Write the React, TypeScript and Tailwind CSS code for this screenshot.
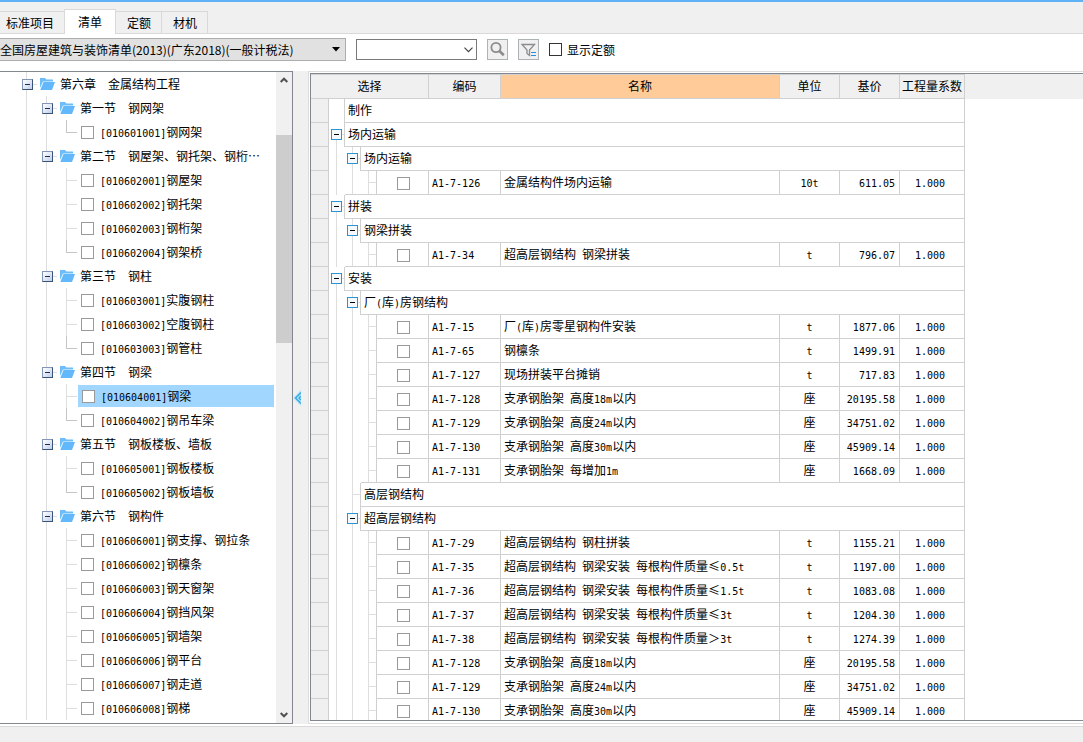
import { useState } from 'react';

type TreeItem = { title: string; items: string[][]; more?: boolean };

const CHAPTER = '第六章　金属结构工程';

const SECTIONS: TreeItem[] = [
  { title: '第一节　钢网架', items: [['010601001', '钢网架']] },
  {
    title: '第二节　钢屋架、钢托架、钢桁…',
    items: [
      ['010602001', '钢屋架'],
      ['010602002', '钢托架'],
      ['010602003', '钢桁架'],
      ['010602004', '钢架桥'],
    ],
  },
  {
    title: '第三节　钢柱',
    items: [
      ['010603001', '实腹钢柱'],
      ['010603002', '空腹钢柱'],
      ['010603003', '钢管柱'],
    ],
  },
  {
    title: '第四节　钢梁',
    items: [
      ['010604001', '钢梁'],
      ['010604002', '钢吊车梁'],
    ],
  },
  {
    title: '第五节　钢板楼板、墙板',
    items: [
      ['010605001', '钢板楼板'],
      ['010605002', '钢板墙板'],
    ],
  },
  {
    title: '第六节　钢构件',
    more: true,
    items: [
      ['010606001', '钢支撑、钢拉条'],
      ['010606002', '钢檩条'],
      ['010606003', '钢天窗架'],
      ['010606004', '钢挡风架'],
      ['010606005', '钢墙架'],
      ['010606006', '钢平台'],
      ['010606007', '钢走道'],
      ['010606008', '钢梯'],
    ],
  },
];

type Row =
  | { level: 0 | 1; title: string; open?: boolean }
  | { level: 2; code: string; name: string; unit: string; price: string };

const q = (code: string, name: string, unit: string, price: string): Row => ({
  level: 2,
  code,
  name,
  unit,
  price,
});

const ROWS: Row[] = [
  { level: 0, title: '制作' },
  { level: 0, title: '场内运输', open: true },
  { level: 1, title: '场内运输', open: true },
  q('A1-7-126', '金属结构件场内运输', '10t', '611.05'),
  { level: 0, title: '拼装', open: true },
  { level: 1, title: '钢梁拼装', open: true },
  q('A1-7-34', '超高层钢结构 钢梁拼装', 't', '796.07'),
  { level: 0, title: '安装', open: true },
  { level: 1, title: '厂(库)房钢结构', open: true },
  q('A1-7-15', '厂(库)房零星钢构件安装', 't', '1877.06'),
  q('A1-7-65', '钢檩条', 't', '1499.91'),
  q('A1-7-127', '现场拼装平台摊销', 't', '717.83'),
  q('A1-7-128', '支承钢胎架 高度18m以内', '座', '20195.58'),
  q('A1-7-129', '支承钢胎架 高度24m以内', '座', '34751.02'),
  q('A1-7-130', '支承钢胎架 高度30m以内', '座', '45909.14'),
  q('A1-7-131', '支承钢胎架 每增加1m', '座', '1668.09'),
  { level: 1, title: '高层钢结构' },
  { level: 1, title: '超高层钢结构', open: true },
  q('A1-7-29', '超高层钢结构 钢柱拼装', 't', '1155.21'),
  q('A1-7-35', '超高层钢结构 钢梁安装 每根构件质量≤0.5t', 't', '1197.00'),
  q('A1-7-36', '超高层钢结构 钢梁安装 每根构件质量≤1.5t', 't', '1083.08'),
  q('A1-7-37', '超高层钢结构 钢梁安装 每根构件质量≤3t', 't', '1204.30'),
  q('A1-7-38', '超高层钢结构 钢梁安装 每根构件质量＞3t', 't', '1274.39'),
  q('A1-7-128', '支承钢胎架 高度18m以内', '座', '20195.58'),
  q('A1-7-129', '支承钢胎架 高度24m以内', '座', '34751.02'),
  q('A1-7-130', '支承钢胎架 高度30m以内', '座', '45909.14'),
];

/** Latin runs are set in a half-width mono face, so two letters fill one Chinese cell. */
function Mixed({ text }: { text: string }) {
  return (
    <>
      {text.split(/([\x20-\x7e]+)/).map((part, i) =>
        i % 2 ? (
          <span
            key={i}
            className="font-['DejaVu_Sans_Mono','Noto_Sans_CJK_SC',monospace] text-[10px] leading-none whitespace-pre"
          >
            {part}
          </span>
        ) : (
          part
        ),
      )}
    </>
  );
}

function Check({ label }: { label: string }) {
  return (
    <input
      type="checkbox"
      aria-label={label}
      className="block size-[13px] shrink-0 appearance-none border border-[#999] bg-white checked:bg-[#5eb8fb]"
    />
  );
}

function Folder() {
  return (
    <svg width="15" height="12" viewBox="0 0 15 12" className="shrink-0" aria-hidden="true">
      <path d="M0 0h5l1.5 1.5H13V3.5H3L0 10z" fill="#6dbdfb" />
      <path d="M3.5 4H15l-3 8H.3z" fill="#62b8fb" />
    </svg>
  );
}

function TreeGuide({ kind }: { kind: 'line' | 'branch' | 'last' | 'node' }) {
  if (kind === 'branch' || kind === 'last') {
    const color = kind === 'last' ? 'border-[#c4c4c4]' : 'border-[#dedede]';
    return (
      <span className="flex h-6 w-5 shrink-0 flex-col pl-[9px]">
        <span className={`h-[13px] border-b border-l ${color}`} />
        {kind === 'branch' && <span className="flex-1 border-l border-[#dedede]" />}
      </span>
    );
  }
  return (
    <span className="relative h-6 w-5 shrink-0 pl-[9px]">
      <span className="block h-6 border-l border-[#dedede]" />
      {kind === 'node' && (
        <>
          <span className="absolute top-3 right-0 w-1 border-t border-[#dedede]" />
          <button
            type="button"
            aria-label="折叠"
            className="absolute top-[7px] left-[5px] flex size-[11px] items-center justify-center border border-[#8496b4] border-r-[#3b5375] border-b-[#3b5375] bg-linear-to-br from-white to-[#c3d0ea]"
          >
            <span className="h-px w-[5px] bg-[#1c2f52]" />
          </button>
        </>
      )}
    </span>
  );
}

function Tree() {
  const [selected, setSelected] = useState('010604001');
  return (
    <div className="min-w-0 flex-1 overflow-hidden pl-[17px] whitespace-nowrap">
      <div className="flex h-6 items-center">
        <TreeGuide kind="node" />
        <span className="flex items-center gap-[5px] pl-[3px]">
          <Folder />
          {CHAPTER}
        </span>
      </div>
      {SECTIONS.map((section) => (
        <div key={section.title}>
          <div className="flex h-6 items-center">
            <TreeGuide kind="line" />
            <TreeGuide kind="node" />
            <span className="flex items-center gap-[5px] pl-[3px]">
              <Folder />
              {section.title}
            </span>
          </div>
          {section.items.map(([code, name], i, all) => (
            <div key={code} className="flex h-6 items-center">
              <TreeGuide kind="line" />
              <TreeGuide kind="line" />
              <TreeGuide kind={i === all.length - 1 && !section.more ? 'last' : 'branch'} />
              <div
                onClick={() => setSelected(code)}
                className={`mr-[2px] flex h-[22px] flex-1 items-center gap-[6px] pl-1 ${
                  code === selected ? 'ml-px bg-[#a1d6ff]' : ''
                }`}
              >
                <Check label={name} />
                <span>
                  <Mixed text={`[${code}]${name}`} />
                </span>
              </div>
            </div>
          ))}
        </div>
      ))}
    </div>
  );
}

function ScrollBar() {
  return (
    <div className="flex w-4 shrink-0 flex-col items-center bg-[#f0f0f0]">
      <button type="button" aria-label="向上滚动" className="flex h-4 w-full items-center justify-center">
        <svg width="8" height="6" viewBox="0 0 8 6" fill="none" stroke="#505050" strokeWidth="2">
          <path d="M.7 5 4 1.7 7.3 5" />
        </svg>
      </button>
      <div className="mt-[47px] h-[208px] w-full bg-[#cdcdcd]" />
      <button type="button" aria-label="向下滚动" className="mt-auto flex h-4 w-full items-center justify-center">
        <svg width="8" height="6" viewBox="0 0 8 6" fill="none" stroke="#505050" strokeWidth="2">
          <path d="M.7 1 4 4.3 7.3 1" />
        </svg>
      </button>
    </div>
  );
}

/** One 16px tree column of the quota table. */
function GridGuide({
  kind,
  edge,
  bottom,
}: {
  kind: 'none' | 'line' | 'branch' | 'root' | 'node';
  edge: boolean;
  bottom: boolean;
}) {
  const node = kind === 'root' || kind === 'node';
  return (
    <td
      className={`h-6 p-0 ${edge ? 'border-r border-r-[#d0d0d0]' : ''} ${
        bottom ? 'border-b border-b-[#d0d0d0]' : ''
      }`}
    >
      <div className={`relative flex flex-col pl-[7px] ${bottom ? 'h-[23px]' : 'h-6'}`}>
        {kind !== 'none' && (
          <>
            <span
              className={`h-3 ${kind === 'root' ? '' : 'border-l border-[#dedede]'} ${
                kind === 'line' ? '' : 'border-b border-b-[#dedede]'
              }`}
            />
            <span className="flex-1 border-l border-[#dedede]" />
          </>
        )}
        {node && (
          <button
            type="button"
            aria-label="折叠"
            className="absolute top-[6px] left-[2px] flex size-[11px] items-center justify-center border border-[#2c93d0] bg-[#f4f9fd]"
          >
            <span className="h-px w-[5px] bg-black" />
          </button>
        )}
      </div>
    </td>
  );
}

const CELL =
  'h-6 overflow-hidden border-r border-b border-[#d0d0d0] p-0 pb-[2px] leading-5 whitespace-nowrap';

function QuotaRow({ row, next }: { row: Row; next: number }) {
  const guides = [];
  for (let col = 0; col <= row.level; col++) {
    let kind: 'none' | 'line' | 'branch' | 'root' | 'node' = 'line';
    if (col === row.level) {
      if (row.level === 2) kind = 'branch';
      else if (!row.open) kind = col === 0 ? 'none' : 'branch';
      else kind = col === 0 ? 'root' : 'node';
    }
    guides.push(<GridGuide key={col} kind={kind} edge={col === row.level} bottom={col > next} />);
  }

  return (
    <tr>
      <td className={`${CELL} bg-[#f0f0f0]`} />
      {guides}
      {row.level === 2 ? (
        <>
          <td className={`${CELL} pt-1 pl-5`}>
            <Check label={row.code} />
          </td>
          <td className={`${CELL} pl-[3px]`}>
            <Mixed text={row.code} />
          </td>
          <td className={`${CELL} pl-[3px]`}>
            <Mixed text={row.name} />
          </td>
          <td className={`${CELL} text-center`}>
            <Mixed text={row.unit} />
          </td>
          <td className={`${CELL} pr-1 text-right`}>
            <Mixed text={row.price} />
          </td>
          <td className={`${CELL} pr-1 text-center`}>
            <Mixed text="1.000" />
          </td>
        </>
      ) : (
        <td colSpan={8 - row.level} className={`${CELL} pl-[3px]`}>
          <Mixed text={row.title} />
        </td>
      )}
    </tr>
  );
}

function QuotaTable() {
  const head =
    'h-[25px] border-r border-y border-[#d0d0d0] p-0 pb-[2px] leading-5 font-normal whitespace-nowrap';
  return (
    <table className="w-full table-fixed border-separate border-spacing-0">
      <colgroup>
        <col className="w-[18px]" />
        <col className="w-4" />
        <col className="w-4" />
        <col className="w-4" />
        <col className="w-[52px]" />
        <col className="w-[72px]" />
        <col className="w-[279px]" />
        <col className="w-[60px]" />
        <col className="w-[60px]" />
        <col className="w-[65px]" />
        <col />
      </colgroup>
      <thead className="bg-[#f0f0f0]">
        <tr>
          <th colSpan={5} className={head}>选择</th>
          <th className={head}>编码</th>
          <th className={`${head} bg-[#ffcc99]`}>名称</th>
          <th className={head}>单位</th>
          <th className={head}>基价</th>
          <th className={head}>工程量系数</th>
          <th className="p-0" />
        </tr>
      </thead>
      <tbody>
        {ROWS.map((row, i) => (
          <QuotaRow key={i} row={row} next={ROWS[i + 1]?.level ?? 2} />
        ))}
      </tbody>
    </table>
  );
}

const TABS = ['标准项目', '清单', '定额', '材机'];

function Tabs() {
  const [active, setActive] = useState('清单');
  return (
    <div role="tablist" className="flex h-8 shrink-0 items-end border-b border-[#d9d9d9]">
      {TABS.map((tab, i) => (
        <button
          key={tab}
          type="button"
          role="tab"
          aria-selected={tab === active}
          onClick={() => setActive(tab)}
          className={
            tab === active
              ? '-mb-px -ml-px h-[25px] border-x border-t border-[#d9d9d9] bg-white px-[13px]'
              : `h-[22px] border-t border-r border-[#d9d9d9] pr-[10px] ${i === 0 ? 'pl-[6px]' : 'pl-[11px]'}`
          }
        >
          {tab}
        </button>
      ))}
    </div>
  );
}

function Toolbar() {
  return (
    <div className="flex h-[37px] shrink-0 items-start bg-white pt-1">
      <div className="relative w-[346px] shrink-0">
        <select
          aria-label="清单库"
          className="block h-[23px] w-full appearance-none border border-l-0 border-[#adadad] bg-[#e1e1e1] pr-6 text-xs"
        >
          <option>全国房屋建筑与装饰清单(2013)(广东2018)(一般计税法)</option>
        </select>
        <svg width="8" height="5" viewBox="0 0 8 5" className="pointer-events-none absolute top-[9px] right-[6px]">
          <path d="M0 0h8L4 4.5z" fill="#000" />
        </svg>
      </div>
      <div className="relative mt-px ml-[10px] w-[121px] shrink-0">
        <input aria-label="查找" className="block h-[21px] w-full border border-[#7a7a7a] bg-white pr-5 pl-1" />
        <button type="button" aria-label="展开" className="absolute top-[8px] right-[4px]">
          <svg width="9" height="6" viewBox="0 0 9 6" fill="none" stroke="#444" strokeWidth="1.2" className="block">
            <path d="M.5.7l4 4 4-4" />
          </svg>
        </button>
      </div>
      <button
        type="button"
        aria-label="搜索"
        className="mt-px ml-[10px] flex size-[21px] items-center justify-center border border-[#adb2b5] bg-[#f0f0f0]"
      >
        <svg width="15" height="15" viewBox="0 0 15 15" fill="none" stroke="#8c8c8c">
          <circle cx="6" cy="5.5" r="4.6" strokeWidth="1.8" />
          <path d="M9.2 8.8l4.6 4.4" strokeWidth="2.6" />
        </svg>
      </button>
      <button
        type="button"
        aria-label="筛选"
        className="mt-px ml-[10px] flex size-[21px] items-center justify-center border border-[#adb2b5] bg-[#f0f0f0]"
      >
        <svg width="15" height="14" viewBox="0 0 15 14" fill="none">
          <path d="M1 1.5h12.5L8.5 7v5.5L6 10.5V7z" stroke="#8c8c8c" strokeWidth="1.3" />
          <path d="M10 9.5h5M10 12.5h5" stroke="#2490e0" />
        </svg>
      </button>
      <label className="ml-[10px] flex h-[23px] items-center gap-[5px]">
        <input
          type="checkbox"
          className="size-[13px] appearance-none border border-[#333] bg-white checked:bg-[#5eb8fb]"
        />
        显示定额
      </label>
    </div>
  );
}

export default function App() {
  return (
    <div
      lang="zh-CN"
      className="flex h-screen flex-col overflow-hidden border-t-2 border-[#5eb2f5] bg-[#f0f0f0] font-['Noto_Sans_CJK_SC',sans-serif] text-xs text-black"
    >
      <Tabs />
      <Toolbar />
      <main className="flex min-h-0 flex-1 bg-white">
        <section className="flex w-[293px] shrink-0 border-y border-r border-[#828790] bg-white">
          <Tree />
          <ScrollBar />
        </section>
        <div className="flex w-[15px] shrink-0 items-center bg-[#f0f0f0]">
          <button type="button" aria-label="收起">
            <svg width="8" height="16" viewBox="0 0 8 16" fill="none" className="block">
              <path d="M8 0v16L0 8z" fill="#b5e2f7" />
              <path d="M8 2.5 2.5 8 8 13.5M8 6 6 8l2 2" stroke="#35a8e0" strokeWidth="1.3" />
            </svg>
          </button>
        </div>
        <section className="flex min-w-0 flex-1 flex-col border-y border-l border-[#dcdcdc] bg-white pt-px pb-[2px] pl-px">
          <div className="min-h-0 flex-1 overflow-hidden border-y border-l border-[#828790]">
            <QuotaTable />
          </div>
        </section>
      </main>
      <footer className="h-[18px] shrink-0 border-t-2 border-white">
        <div className="h-px bg-[#d9d9d9]" />
      </footer>
    </div>
  );
}
